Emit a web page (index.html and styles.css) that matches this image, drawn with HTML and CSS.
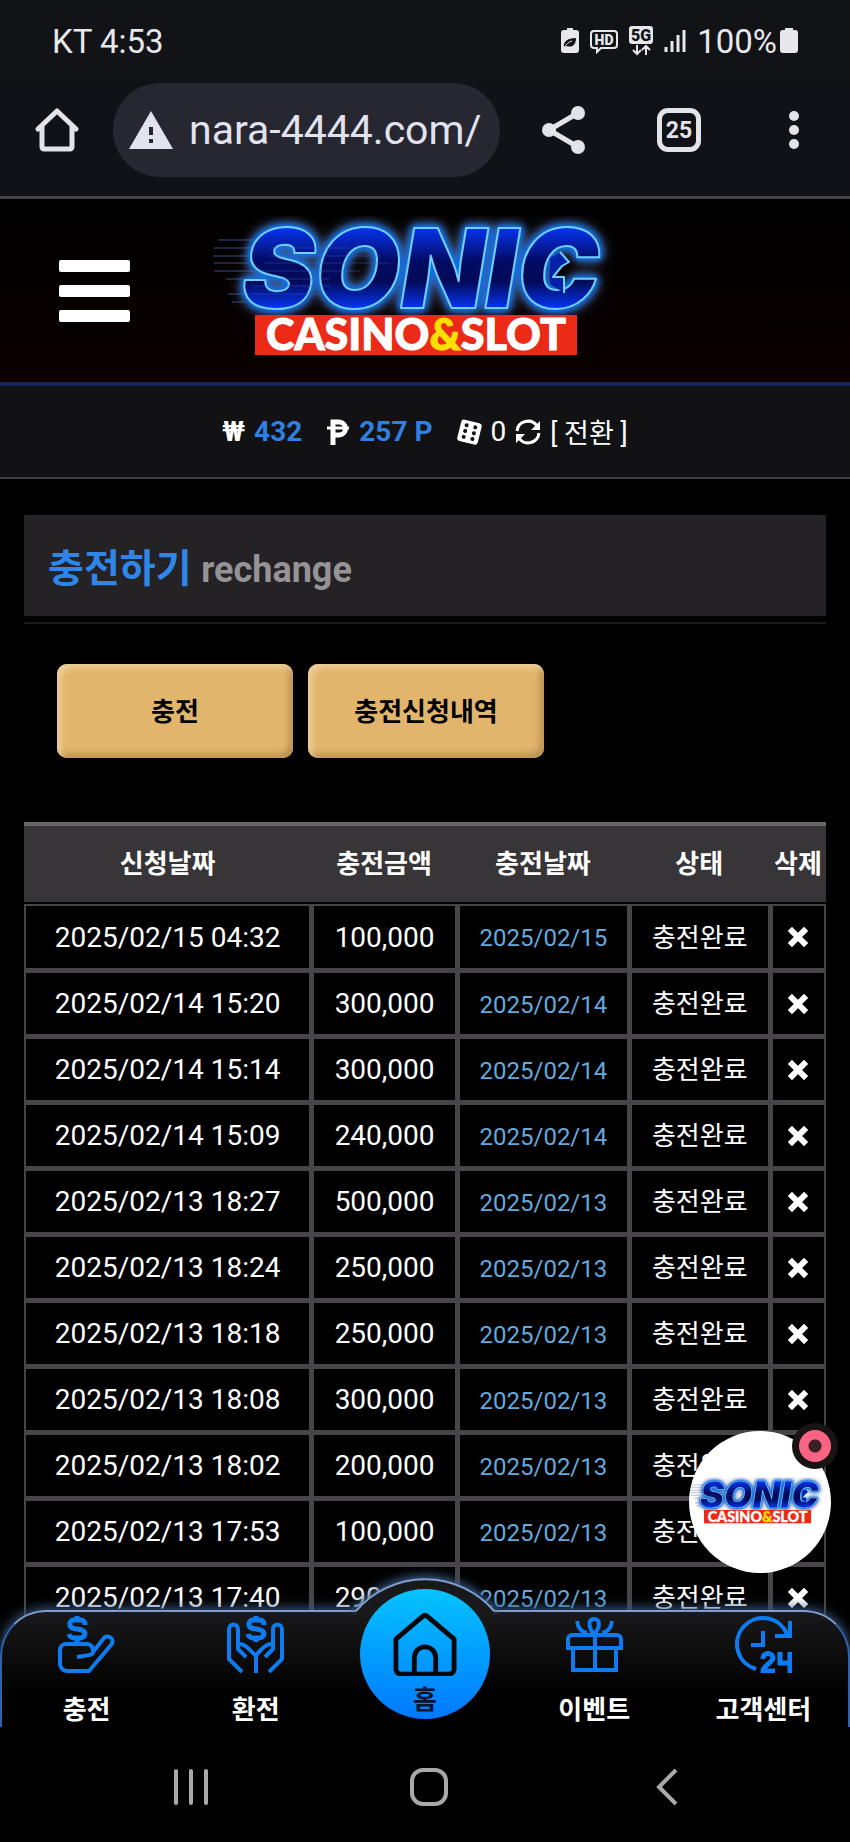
FILE: index.html
```html
<!DOCTYPE html>
<html lang="ko">
<head>
  <meta charset="UTF-8" />
  <meta name="viewport" content="width=device-width, initial-scale=1.0"/>
  <title>충전하기</title>
  <link rel="stylesheet" href="styles.css">
</head>
<body>
  <div class="status-bar">
    <span>KT 4:53</span>
    <div class="status-icons">
      <svg width="18" height="26" viewBox="0 0 18 26"><path d="M6 0h6v2h3a3 3 0 0 1 3 3v17a3 3 0 0 1-3 3H3a3 3 0 0 1-3-3V5a3 3 0 0 1 3-3h3z" fill="#e8e8ec"/><path d="M3 19c-1-5 3-9 12-9 0 7-4 10-9 8" fill="#121317"/><path d="M3 20c2-4 5-6 8-7" stroke="#e8e8ec" fill="none"/></svg>
      <svg width="28" height="26" viewBox="0 0 28 26"><path d="M4 3h20a3 3 0 0 1 3 3v11a3 3 0 0 1-3 3H11l-4 4v-4H4a3 3 0 0 1-3-3V6a3 3 0 0 1 3-3z" fill="none" stroke="#e8e8ec" stroke-width="2"/><text x="14" y="17" text-anchor="middle" class="hd">HD</text></svg>
      <svg width="24" height="30" viewBox="0 0 24 30"><rect width="24" height="18" rx="3" fill="#e8e8ec"/><text x="12" y="15" text-anchor="middle" class="fiveg">5G</text><path d="M8 19v9M4 24l4 4 4-4M17 29v-9M13 24l4-4 4 4" fill="none" stroke="#e8e8ec" stroke-width="2"/></svg>
      <svg width="22" height="24" viewBox="0 0 22 24"><path d="M2 18v5M8 12v11M14 6v17M20 1v22" stroke="#e8e8ec" stroke-width="3"/></svg>
      <span>100%</span>
      <svg class="battery" width="18" height="26" viewBox="0 0 18 26"><path d="M5 0h8v2h2a3 3 0 0 1 3 3v17a3 3 0 0 1-3 3H3a3 3 0 0 1-3-3V5a3 3 0 0 1 3-3h2z" fill="#e8e8ec"/></svg>
    </div>
  </div>

  <div class="browser-bar">
    <button type="button" class="icon-button" aria-label="홈페이지">
      <svg width="44" height="44" viewBox="0 0 44 44"><path d="M3 21L22 3l19 18M7 18v21a2 2 0 0 0 2 2h26a2 2 0 0 0 2-2V18" fill="none" stroke="#e3e3ea" stroke-width="5" stroke-linejoin="round" stroke-linecap="round"/></svg>
    </button>
    <div class="address">
      <svg width="44" height="38" viewBox="0 0 44 38"><path d="M22 0L44 38H0z" fill="#e3e2ef"/><path d="M20 16h4v8h-4zM20 28h4v4h-4z" fill="#272731"/></svg>
      <input type="text" value="nara-4444.com/" aria-label="주소" />
    </div>
    <button type="button" class="icon-button" aria-label="공유">
      <svg width="44" height="48" viewBox="0 0 44 48"><path d="M36 7L7 24l29 17" fill="none" stroke="#e3e3ea" stroke-width="5"/><circle cx="36" cy="7" r="7" fill="#e3e3ea"/><circle cx="7" cy="24" r="7" fill="#e3e3ea"/><circle cx="36" cy="41" r="7" fill="#e3e3ea"/></svg>
    </button>
    <button type="button" class="icon-button tabs">25</button>
    <button type="button" class="icon-button" aria-label="메뉴">
      <svg width="44" height="40" viewBox="0 0 44 40"><circle cx="22" cy="6" r="5" fill="#e3e3ea"/><circle cx="22" cy="20" r="5" fill="#e3e3ea"/><circle cx="22" cy="34" r="5" fill="#e3e3ea"/></svg>
    </button>
  </div>

  <div class="page">
    <header class="header">
      <button type="button" class="menu-button" aria-label="전체메뉴"><i></i><i></i><i></i></button>
      <a href="#" class="logo">
        <svg width="430" height="150" viewBox="0 0 430 150">
          <defs>
            <linearGradient id="sonicFill" x1="0" y1="0" x2="0" y2="1">
              <stop offset="0.2" stop-color="#0733f0"/>
              <stop offset="0.45" stop-color="#020b62"/>
              <stop offset="0.6" stop-color="#020a58"/>
              <stop offset="0.8" stop-color="#0634f2"/>
            </linearGradient>
          </defs>
          <g id="logo">
            <path d="M8 24H60M4 32H56M3 40H54M4 47H52M4 55H50M16 63H52M18 78H34M22 86H34" stroke="#3b4c86" stroke-width="1"/>
            <text class="logo-word" x="32" y="92">SONIC</text>
            <path d="M340 42L352 36 359 46 352 50 343 61 354 61 354 77 340 68z" fill="#0421a8"/>
            <path d="M350 36L359 46 352 50 343 61 354 61 354 77" fill="none" stroke="#6fd0ff" stroke-width="2" stroke-linejoin="round"/>
            <path d="M60 32H140M60 40H170M54 47H180M52 55H150M50 63H120M44 70H120M40 78H110" stroke="#3a62d8" stroke-width="1" opacity="0.4"/>
            <rect x="45" y="99" width="322" height="40" fill="#ec2a18"/>
            <text class="logo-sub" x="206" y="134" text-anchor="middle">CASINO<tspan class="logo-and">&amp;</tspan>SLOT</text>
          </g>
        </svg>
      </a>
    </header>

    <div class="balance">
      <span class="won">₩</span>
      <b>432</b>
      <svg class="peso" width="24" height="26" viewBox="0 0 24 26"><path d="M7 26V3h6a6 6 0 0 1 0 13H7" fill="none" stroke="#fff" stroke-width="5"/><path d="M1 9h22" stroke="#fff" stroke-width="3"/></svg>
      <b>257 P</b>
      <svg class="dice" width="25" height="26" viewBox="0 0 25 26"><g transform="rotate(14 12 13)"><rect x="2" y="2" width="21" height="22" rx="3" fill="#fff"/><g fill="#121214"><circle cx="8" cy="7" r="2"/><circle cx="17" cy="7" r="2"/><circle cx="8" cy="13" r="2"/><circle cx="17" cy="13" r="2"/><circle cx="8" cy="19" r="2"/><circle cx="17" cy="19" r="2"/></g></g></svg>
      <span>0</span>
      <svg width="26" height="26" viewBox="0 0 26 26"><path d="M2 12a11 11 0 0 1 20-5M24 14a11 11 0 0 1-20 5" fill="none" stroke="#fff" stroke-width="3"/><path d="M25 2v9h-9zM1 24v-9h9z" fill="#fff"/></svg>
      <a href="#">[ 전환 ]</a>
    </div>

    <main class="content">
      <h1 class="title">충전하기 <small>rechange</small></h1>
      <div class="buttons">
        <button type="button">충전</button>
        <button type="button">충전신청내역</button>
      </div>

      <table class="history">
        <colgroup>
          <col class="col-request"><col class="col-amount"><col class="col-date"><col class="col-state"><col class="col-delete">
        </colgroup>
        <thead>
          <tr><th>신청날짜</th><th>충전금액</th><th>충전날짜</th><th>상태</th><th>삭제</th></tr>
        </thead>
        <tbody>
          <tr><td>2025/02/15 04:32</td><td>100,000</td><td class="date">2025/02/15</td><td class="state">충전완료</td><td><button type="button" aria-label="삭제"><svg width="20" height="20" viewBox="0 0 20 20"><path id="times" d="M4 4L16 16M16 4L4 16" stroke="#fff" stroke-width="6" stroke-linecap="square"/></svg></button></td></tr>
          <tr><td>2025/02/14 15:20</td><td>300,000</td><td class="date">2025/02/14</td><td class="state">충전완료</td><td><button type="button" aria-label="삭제"><svg width="20" height="20"><use href="#times"/></svg></button></td></tr>
          <tr><td>2025/02/14 15:14</td><td>300,000</td><td class="date">2025/02/14</td><td class="state">충전완료</td><td><button type="button" aria-label="삭제"><svg width="20" height="20"><use href="#times"/></svg></button></td></tr>
          <tr><td>2025/02/14 15:09</td><td>240,000</td><td class="date">2025/02/14</td><td class="state">충전완료</td><td><button type="button" aria-label="삭제"><svg width="20" height="20"><use href="#times"/></svg></button></td></tr>
          <tr><td>2025/02/13 18:27</td><td>500,000</td><td class="date">2025/02/13</td><td class="state">충전완료</td><td><button type="button" aria-label="삭제"><svg width="20" height="20"><use href="#times"/></svg></button></td></tr>
          <tr><td>2025/02/13 18:24</td><td>250,000</td><td class="date">2025/02/13</td><td class="state">충전완료</td><td><button type="button" aria-label="삭제"><svg width="20" height="20"><use href="#times"/></svg></button></td></tr>
          <tr><td>2025/02/13 18:18</td><td>250,000</td><td class="date">2025/02/13</td><td class="state">충전완료</td><td><button type="button" aria-label="삭제"><svg width="20" height="20"><use href="#times"/></svg></button></td></tr>
          <tr><td>2025/02/13 18:08</td><td>300,000</td><td class="date">2025/02/13</td><td class="state">충전완료</td><td><button type="button" aria-label="삭제"><svg width="20" height="20"><use href="#times"/></svg></button></td></tr>
          <tr><td>2025/02/13 18:02</td><td>200,000</td><td class="date">2025/02/13</td><td class="state">충전완료</td><td><button type="button" aria-label="삭제"><svg width="20" height="20"><use href="#times"/></svg></button></td></tr>
          <tr><td>2025/02/13 17:53</td><td>100,000</td><td class="date">2025/02/13</td><td class="state">충전완료</td><td><button type="button" aria-label="삭제"><svg width="20" height="20"><use href="#times"/></svg></button></td></tr>
          <tr><td>2025/02/13 17:40</td><td>290,000</td><td class="date">2025/02/13</td><td class="state">충전완료</td><td><button type="button" aria-label="삭제"><svg width="20" height="20"><use href="#times"/></svg></button></td></tr>
        </tbody>
      </table>
    </main>

    <button type="button" class="floating" aria-label="SONIC">
      <svg width="143" height="50" viewBox="0 0 430 150"><use href="#logo"/></svg>
      <span class="floating-badge"></span>
    </button>

    <nav class="bottom-nav">
      <svg class="hump" width="160" height="50" viewBox="0 0 160 50"><path d="M11 50V43L12 41A91 91 0 0 1 148 41L149 43V50z" fill="#19191b"/><path d="M11 42A91 91 0 0 1 149 42" fill="none" stroke="#7d9dd2" stroke-width="2"/></svg>
      <a href="#">
        <svg width="57" height="57" viewBox="0 0 57 57" fill="none" stroke="#0f7bf0" stroke-width="4" stroke-linejoin="round"><path d="M27 9V8a4 4 0 0 0-4-4h-7a4 4 0 0 0-4 5c0 6 15 2 15 9a5 5 0 0 1-5 4h-6a5 5 0 0 1-5-4M19 0v4M19 22v6" stroke-width="5"/><path d="M35 36c0-5-2-8-6-8H8a6 6 0 0 0-6 6v14a7 7 0 0 0 7 7h22l22-26c5-6-3-11-7-7L35 36c0 3-2 3-16 5"/></svg>
        <span>충전</span>
      </a>
      <a href="#">
        <svg width="57" height="57" viewBox="0 0 57 57" fill="none" stroke="#0f7bf0" stroke-width="4" stroke-linejoin="round"><path d="M37 9V8a4 4 0 0 0-4-4h-7a4 4 0 0 0-4 5c0 6 15 2 15 9a5 5 0 0 1-5 4h-6a5 5 0 0 1-5-4M29 0v4M29 22v4" stroke-width="5"/><path d="M15 56L2 43V13c0-6 9-6 9 0v20l8 8M42 56l13-13V13c0-6-9-6-9 0v20l-8 8M11 28c6-1 10 4 17 11M46 28c-6-1-11 4-15 9l-2 2v18"/></svg>
        <span>환전</span>
      </a>
      <a href="#" class="home">
        <svg width="66" height="66" viewBox="0 0 66 66" fill="none" stroke="#02070c" stroke-width="5" stroke-linejoin="round"><path d="M3 28L30 5q3-3 6 0l27 23v31a5 5 0 0 1-5 5H8a5 5 0 0 1-5-5zM22 63V47a11 11 0 0 1 22 0v16"/></svg>
        <span>홈</span>
      </a>
      <a href="#">
        <svg width="57" height="57" viewBox="0 0 57 57" fill="none" stroke="#0f7bf0" stroke-width="4"><path d="M2 32V23a4 4 0 0 1 4-4h45a4 4 0 0 1 4 4v9zM7 32v22h43V32M29 18v37M11 5c1 7 4 11 10 12M46 5c-1 7-4 11-10 12M28 18c-6-7-6-15 0-15s7 8 0 15"/></svg>
        <span>이벤트</span>
      </a>
      <a href="#">
        <svg width="57" height="57" viewBox="0 0 57 57" fill="none" stroke="#0f7bf0" stroke-width="4"><path d="M21 53A26 26 0 1 1 52 18M55 5v15H40M28 15v14H16"/><path d="M28 43v-1c0-6 10-6 10 0 0 4-10 8-10 13h12M45 36v11h10M55 36v21" stroke-width="5"/></svg>
        <span>고객센터</span>
      </a>
    </nav>
  </div>

  <div class="system-bar">
    <button type="button" aria-label="최근 앱"><svg width="36" height="38" viewBox="0 0 36 38"><path d="M3 3v32M18 3v32M33 3v32" stroke="#a9a8aa" stroke-width="4" stroke-linecap="round"/></svg></button>
    <button type="button" aria-label="홈"><svg width="38" height="38" viewBox="0 0 38 38"><rect x="2" y="2" width="34" height="34" rx="11" fill="none" stroke="#a9a8aa" stroke-width="4"/></svg></button>
    <button type="button" aria-label="뒤로"><svg width="24" height="38" viewBox="0 0 24 38"><path d="M21 2L4 19l17 17" fill="none" stroke="#a9a8aa" stroke-width="4"/></svg></button>
  </div>
</body>
</html>
```

FILE: styles.css
```css
* {
  box-sizing: border-box;
}

body {
  margin: 0;
  height: 100vh;
  display: flex;
  flex-direction: column;
  background: #000;
  color: #fff;
  font-family: Roboto, "Noto Sans CJK KR", sans-serif;
  font-size: 28px;
}

a {
  color: inherit;
  text-decoration: none;
}

button {
  padding: 0;
  border: none;
  background: none;
  color: inherit;
  font-family: inherit;
  cursor: pointer;
}

svg {
  display: block;
}

/* phone status bar */
.status-bar {
  flex: none;
  display: flex;
  justify-content: space-between;
  align-items: center;
  height: 82px;
  padding: 0 52px;
  background: #121317;
  color: #e8e8ec;
  font-size: 33px;
}

.status-icons {
  display: flex;
  align-items: center;
  gap: 11px;
}

.battery {
  margin-left: -8px;
}

.hd {
  font: 900 14px Roboto, sans-serif;
  fill: #e8e8ec;
}

.fiveg {
  font: 900 16px Roboto, sans-serif;
  fill: #121317;
}

/* browser toolbar */
.browser-bar {
  flex: none;
  display: flex;
  align-items: center;
  height: 117px;
  padding: 0 34px 18px 35px;
  gap: 71px;
  background: #111218;
  border-bottom: 3px solid #444348;
}

.icon-button {
  flex: none;
  width: 44px;
}

.address {
  flex: 1;
  min-width: 0;
  display: flex;
  align-items: center;
  gap: 16px;
  height: 94px;
  margin: 0 -29px 0 -37px;
  padding: 0 18px 0 16px;
  border-radius: 47px;
  background: #272731;
}

.address svg {
  flex: none;
}

.address input {
  flex: 1;
  min-width: 0;
  padding: 0;
  border: none;
  outline: none;
  background: none;
  color: #e3e2ef;
  font-family: Roboto, sans-serif;
  font-size: 41px;
}

.tabs {
  height: 44px;
  border: 5px solid #e3e3ea;
  border-radius: 11px;
  color: #e3e3ea;
  font-size: 23px;
  font-weight: bold;
}

/* site */
.page {
  flex: 1;
  min-height: 0;
  position: relative;
  overflow: hidden;
}

.header {
  display: grid;
  grid-template-columns: 1fr auto 1fr;
  align-items: center;
  height: 187px;
  padding: 0 59px;
  background: linear-gradient(#000, #0b0000);
  border-bottom: 4px solid #17265c;
}

.menu-button {
  display: flex;
  flex-direction: column;
  gap: 13px;
  width: 71px;
}

.menu-button i {
  height: 12px;
  border-radius: 2px;
  background: #fff;
}

.logo {
  grid-column: 2;
}

.logo-word {
  font: italic 900 110px Inter, sans-serif;
  fill: url(#sonicFill);
  stroke: #6fd0ff;
  stroke-width: 2px;
  stroke-linejoin: round;
  filter: drop-shadow(0 0 3px #0870f0) drop-shadow(0 0 3px #0870f0) drop-shadow(0 0 6px #5a6a9a);
}

.logo-sub {
  font: 900 43px Lato, sans-serif;
  fill: #fff;
  stroke: #fff;
  stroke-width: 1px;
}

.logo-and {
  fill: #ffe000;
  stroke: #ffe000;
}

.balance {
  display: flex;
  justify-content: center;
  align-items: center;
  gap: 9px;
  height: 93px;
  background: #121214;
  border-bottom: 2px solid #414043;
}

.balance b {
  color: #2f80e0;
}

.balance a {
  font-size: 27px;
}

.won {
  font-weight: bold;
}

.peso,
.dice {
  margin-left: 15px;
}

.content {
  padding: 36px 24px 0;
}

.title {
  margin: 0;
  padding: 8px 24px 0;
  background: #242224;
  box-shadow: 0 6px 0 #000, 0 8px 0 #1d1b1d;
  color: #3086e8;
  font-size: 39px;
  line-height: 92px;
}

.title small {
  color: #959395;
  font-size: 36px;
}

.buttons {
  display: flex;
  gap: 15px;
  margin: 48px 33px 64px;
}

.buttons button {
  width: 236px;
  height: 94px;
  padding-bottom: 4px;
  border-radius: 10px;
  background: #e2b56c;
  box-shadow: inset 4px 4px 6px #efcf9c, inset -4px -4px 6px #b8904f;
  color: #000;
  font-size: 26px;
  font-weight: bold;
}

.history {
  width: 100%;
  table-layout: fixed;
  border-spacing: 0;
  text-align: center;
}

.col-request { width: 35.8%; }
.col-amount { width: 18.2%; }
.col-date { width: 21.4%; }
.col-state { width: 17.6%; }
.col-delete { width: 7%; }

.history th {
  height: 82px;
  padding: 0 0 6px;
  border-top: 4px solid #696869;
  border-bottom: 2px solid #000;
  background: #373537;
  font-size: 26px;
  white-space: nowrap;
}

.history td {
  height: 66px;
  padding: 0;
  border: 2px solid #474547;
}

.history td + td {
  border-left-width: 3px;
}

.history tr + tr td {
  border-top-width: 3px;
}

.history .date {
  padding-top: 2px;
  color: #63a9de;
  font-size: 24px;
}

.history .state {
  padding-bottom: 4px;
  font-size: 26px;
}

.history td button {
  display: block;
  margin: 0 auto;
}

.floating {
  position: absolute;
  right: 19px;
  bottom: 154px;
  width: 142px;
  height: 142px;
  border-radius: 50%;
  background: #fff;
}

.floating-badge {
  position: absolute;
  top: -8px;
  right: -7px;
  width: 46px;
  height: 46px;
  border: 7px solid #181414;
  border-radius: 50%;
  background: radial-gradient(circle, #3a2024 6px, #fb6383 7px);
}

/* bottom menu */
.bottom-nav {
  position: absolute;
  left: 0;
  right: 0;
  bottom: 0;
  display: grid;
  grid-template-columns: repeat(5, 1fr);
  height: 117px;
  border: 2px solid #2f62ae;
  border-top-color: #7d9dd2;
  border-bottom: none;
  border-radius: 46px 46px 0 0;
  background: linear-gradient(#19191b, #000 85px);
  box-shadow: 0 -2px 12px #38577d;
  font-size: 26px;
  font-weight: bold;
}

.bottom-nav a {
  position: relative;
  display: flex;
  flex-direction: column;
  align-items: center;
  gap: 18px;
  padding-top: 4px;
  line-height: 38px;
}

.hump {
  position: absolute;
  left: 50%;
  top: -43px;
  transform: translateX(-50%);
  filter: drop-shadow(0 -3px 5px #38577d);
  clip-path: inset(-20px 0 4px 0);
}

.bottom-nav .home {
  justify-self: center;
  width: 130px;
  height: 130px;
  margin-top: -23px;
  padding-top: 23px;
  gap: 5px;
  border-radius: 50%;
  background: linear-gradient(#05c3ff, #0078ff);
  color: #02132c;
}

/* android keys */
.system-bar {
  flex: none;
  display: grid;
  grid-template-columns: repeat(3, 1fr);
  align-items: center;
  justify-items: center;
  height: 115px;
  padding: 4px 64px 0 72px;
}
```
